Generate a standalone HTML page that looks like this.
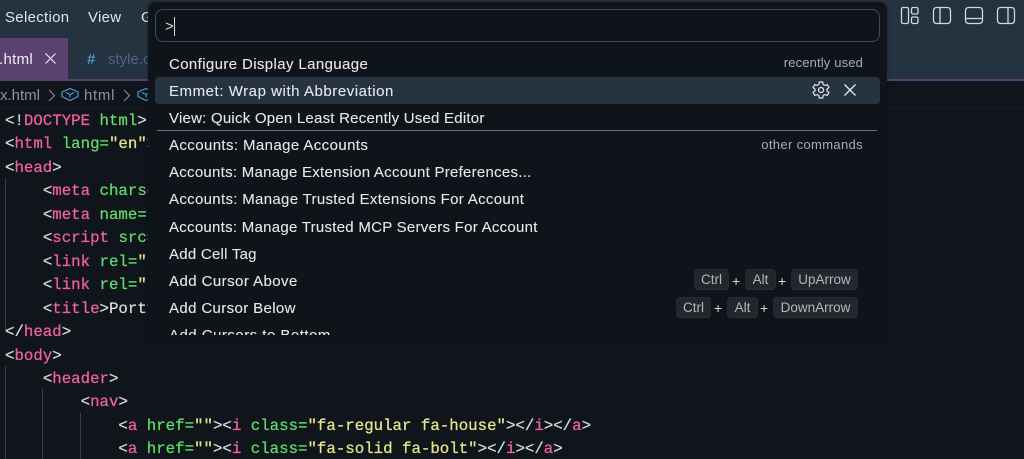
<!DOCTYPE html>
<html lang="en"><head><meta charset="utf-8"><title>Command Palette</title>
<style>
html,body{margin:0;padding:0;width:1024px;height:459px;overflow:hidden;background:#10141b}
body{position:relative;font-family:"Liberation Sans","DejaVu Sans",sans-serif;color:#e6e8ea}
.a{position:absolute;white-space:pre}
#top{position:absolute;left:0;top:0;width:1024px;height:79px;background:#253240;border-bottom:2px solid #5a4072;box-sizing:content-box}
.menu{font-size:15px;top:9px;color:#dfe3e6;letter-spacing:.3px}
#tab{position:absolute;left:0;top:38px;width:68px;height:41px;background:#5b4170}
#crumb{position:absolute;left:0;top:81px;width:1024px;height:26px;background:#10141b;border-bottom:1px solid #1a1f26}
.cl{position:absolute;left:5px;font:15.75px/20px "Liberation Mono",monospace;white-space:pre;color:#d8dadc;margin-top:1px;-webkit-text-stroke:.25px currentColor}
.t{color:#f0609f}.g{color:#5fdc6a}.y{color:#e6e48c}.p{color:#d8dadc}
.ig{position:absolute;width:1px;background:#383c45}
#pal{position:absolute;left:148px;top:2px;width:739px;height:341px;background:#0f141b;border-radius:8px;box-shadow:0 0 4px rgba(0,0,0,.25)}
#inp{position:absolute;left:155px;top:9px;width:725px;height:33px;box-sizing:border-box;border:1px solid #3f4b63;border-radius:8px;background:#0f141b}
#list{position:absolute;left:155px;top:50px;width:725px;height:285px;overflow:hidden}
.row{position:absolute;left:14px;font-size:15px;line-height:20px;color:#e6e8ea;white-space:pre;margin-top:1px;-webkit-text-stroke:.1px currentColor}
#sel{position:absolute;left:0;top:27px;width:725px;height:27px;background:#263341;border-radius:4px}
.hint{position:absolute;font-size:13px;line-height:18px;color:#a8adb3;white-space:pre}
.k{position:absolute;height:21px;line-height:20px;box-sizing:border-box;background:#22272d;border:1px solid #262b31;border-bottom-color:#2d3238;border-radius:4px;color:#b3b7bc;font-size:13.5px;text-align:center}
.pl{position:absolute;font-size:14px;line-height:20px;color:#d8dadc}
svg{position:absolute;overflow:visible}
</style></head><body>
<div id="top"></div>
<div class="a menu" style="left:5px">Selection</div>
<div class="a menu" style="left:88px">View</div>
<div class="a menu" style="left:141px">G</div>
<div id="tab"></div>
<div class="a" style="left:-1px;top:51px;font-size:15px;color:#eceef0;letter-spacing:.3px">.html</div>
<svg style="left:45px;top:53px" width="12" height="12" fill="none" stroke="#e8e8ee" stroke-width="1.2"><path d="M0.5 0.5L10.5 10.5M10.5 0.5L0.5 10.5"/></svg>
<div class="a" style="left:87px;top:51px;font-size:15px;font-weight:700;color:#4f94bf">#</div>
<div class="a" style="left:108px;top:51px;font-size:15px;color:#4d6286">style.css</div>

<div id="crumb"></div>
<div class="a" style="left:0;top:87px;font-size:15px;color:#8d95a0">x.html</div>
<svg style="left:48px;top:89px" width="8" height="13" fill="none" stroke="#8d95a0"><path d="M1 1L6.500 6.500L1 12"/></svg>
<svg style="left:61px;top:87px" width="18" height="15" fill="none" stroke="#4ba0d6" stroke-width="1.2"><path d="M1 5L9 1.500L17 5V9.500L9 13.500L1 9.500Z"/><path d="M5 5.500L9 7.500L13 5.500M9 7.500V10.500"/></svg>
<div class="a" style="left:84px;top:87px;font-size:15px;color:#8d95a0;letter-spacing:.7px">html</div>
<svg style="left:123px;top:89px" width="8" height="13" fill="none" stroke="#8d95a0"><path d="M1 1L6.500 6.500L1 12"/></svg>
<svg style="left:137px;top:87px" width="12" height="15" fill="none" stroke="#4ba0d6" stroke-width="1.2"><path d="M1 5L9 1.500L17 5V9.500L9 13.500L1 9.500Z"/><path d="M5 5.500L9 7.500L13 5.500M9 7.500V10.500"/></svg>

<div class="ig" style="left:5px;top:178px;width:1px;height:152px"></div>
<div class="ig" style="left:5px;top:366px;height:93px"></div>
<div class="ig" style="left:42px;top:389px;height:70px"></div>
<div class="ig" style="left:80px;top:413px;height:46px"></div>

<div class="cl" style="top:110px"><span class="p">&lt;!</span><span class="t">DOCTYPE</span> <span class="g">html</span><span class="p">&gt;</span></div>
<div class="cl" style="top:133px"><span class="p">&lt;</span><span class="t">html</span> <span class="g">lang=</span><span class="y">"en"</span><span class="p">&gt;</span></div>
<div class="cl" style="top:157px"><span class="p">&lt;</span><span class="t">head</span><span class="p">&gt;</span></div>
<div class="cl" style="top:180px">    <span class="p">&lt;</span><span class="t">meta</span> <span class="g">charset</span></div>
<div class="cl" style="top:204px">    <span class="p">&lt;</span><span class="t">meta</span> <span class="g">name=</span><span class="y">"viewport"</span></div>
<div class="cl" style="top:227px">    <span class="p">&lt;</span><span class="t">script</span> <span class="g">src=</span></div>
<div class="cl" style="top:251px">    <span class="p">&lt;</span><span class="t">link</span> <span class="g">rel=</span><span class="y">"stylesheet"</span></div>
<div class="cl" style="top:274px">    <span class="p">&lt;</span><span class="t">link</span> <span class="g">rel=</span><span class="y">"stylesheet"</span></div>
<div class="cl" style="top:298px">    <span class="p">&lt;</span><span class="t">title</span><span class="p">&gt;Portfolio</span></div>
<div class="cl" style="top:321px"><span class="p">&lt;/</span><span class="t">head</span><span class="p">&gt;</span></div>
<div class="cl" style="top:345px"><span class="p">&lt;</span><span class="t">body</span><span class="p">&gt;</span></div>
<div class="cl" style="top:368px">    <span class="p">&lt;</span><span class="t">header</span><span class="p">&gt;</span></div>
<div class="cl" style="top:391px">        <span class="p">&lt;</span><span class="t">nav</span><span class="p">&gt;</span></div>
<div class="cl" style="top:415px">            <span class="p">&lt;</span><span class="t">a</span> <span class="g">href=</span><span class="y">""</span><span class="p">&gt;&lt;</span><span class="t">i</span> <span class="g">class=</span><span class="y">"fa-regular fa-house"</span><span class="p">&gt;&lt;/</span><span class="t">i</span><span class="p">&gt;&lt;/</span><span class="t">a</span><span class="p">&gt;</span></div>
<div class="cl" style="top:438px">            <span class="p">&lt;</span><span class="t">a</span> <span class="g">href=</span><span class="y">""</span><span class="p">&gt;&lt;</span><span class="t">i</span> <span class="g">class=</span><span class="y">"fa-solid fa-bolt"</span><span class="p">&gt;&lt;/</span><span class="t">i</span><span class="p">&gt;&lt;/</span><span class="t">a</span><span class="p">&gt;</span></div>

<svg style="left:900px;top:6px" width="120" height="20" fill="none" stroke="#d3d8dd" stroke-width="1.3">
<rect x="1.500" y="1.500" width="7" height="16" rx="1.500"/><rect x="11.500" y="1.500" width="6.500" height="6.500" rx="1.500"/><rect x="11.500" y="11" width="6.500" height="6.500" rx="1.500"/>
<rect x="33.500" y="1.500" width="17" height="16" rx="3"/><path d="M40 1.500V17.500"/>
<rect x="65.500" y="1.500" width="17" height="16" rx="3"/><path d="M65.500 12.500H82.500"/>
<rect x="97.500" y="1.500" width="17" height="16" rx="3"/><path d="M108 1.500V17.500"/>
</svg>

<div id="pal"></div>
<div id="inp">
<div class="a" style="left:9px;top:8px;font-size:15px;color:#d8dadc">&gt;</div>
<div class="a" style="left:18px;top:7px;width:1px;height:19px;background:#d8dadc"></div>
</div>
<div id="list">
<div id="sel"></div>
<div class="row" style="top:4px;letter-spacing:.38px">Configure Display Language</div>
<div class="hint" style="right:17px;top:4px;letter-spacing:.15px">recently used</div>
<div class="row" style="top:31px;letter-spacing:.55px">Emmet: Wrap with Abbreviation</div>
<svg style="left:657px;top:31px" width="18" height="18" fill="none" stroke="#e6e8ea" stroke-width="1.2"><path d="M7.300 1H10.700L11.200 3.500L12.800 4.400L15.200 3.600L16.900 6.500L15 8.200V9.800L16.900 11.500L15.200 14.400L12.800 13.600L11.200 14.500L10.700 17H7.300L6.800 14.500L5.200 13.600L2.800 14.400L1.100 11.500L3 9.800V8.200L1.100 6.500L2.800 3.600L5.200 4.400L6.800 3.500Z"/><circle cx="9" cy="9" r="2.500"/></svg>
<svg style="left:689px;top:34px" width="12" height="12" fill="none" stroke="#e6e8ea" stroke-width="1.300"><path d="M0.500 0.500L11.500 11.500M11.500 0.500L0.500 11.500"/></svg>
<div class="row" style="top:58px;letter-spacing:.23px">View: Quick Open Least Recently Used Editor</div>
<div style="position:absolute;left:2px;top:80px;width:720px;height:1px;background:#75688f"></div>
<div class="row" style="top:85px;letter-spacing:.4px">Accounts: Manage Accounts</div>
<div class="hint" style="right:17px;top:86px;letter-spacing:.35px">other commands</div>
<div class="row" style="top:112px;letter-spacing:.27px">Accounts: Manage Extension Account Preferences...</div>
<div class="row" style="top:139px;letter-spacing:.32px">Accounts: Manage Trusted Extensions For Account</div>
<div class="row" style="top:167px;letter-spacing:.27px">Accounts: Manage Trusted MCP Servers For Account</div>
<div class="row" style="top:194px;letter-spacing:.25px">Add Cell Tag</div>
<div class="row" style="top:221px;letter-spacing:.44px">Add Cursor Above</div>
<div class="row" style="top:248px;letter-spacing:.37px">Add Cursor Below</div>
<div class="row" style="top:275px;letter-spacing:.48px">Add Cursors to Bottom</div>
<div class="k" style="left:539px;top:219px;width:35px">Ctrl</div>
<div class="pl" style="left:577px;top:221px">+</div>
<div class="k" style="left:590px;top:219px;width:31px">Alt</div>
<div class="pl" style="left:623px;top:221px">+</div>
<div class="k" style="left:636px;top:219px;width:67px">UpArrow</div>
<div class="k" style="left:521px;top:247px;width:35px">Ctrl</div>
<div class="pl" style="left:559px;top:248px">+</div>
<div class="k" style="left:572px;top:247px;width:31px">Alt</div>
<div class="pl" style="left:605px;top:248px">+</div>
<div class="k" style="left:618px;top:247px;width:85px">DownArrow</div>
</div>
</body></html>
